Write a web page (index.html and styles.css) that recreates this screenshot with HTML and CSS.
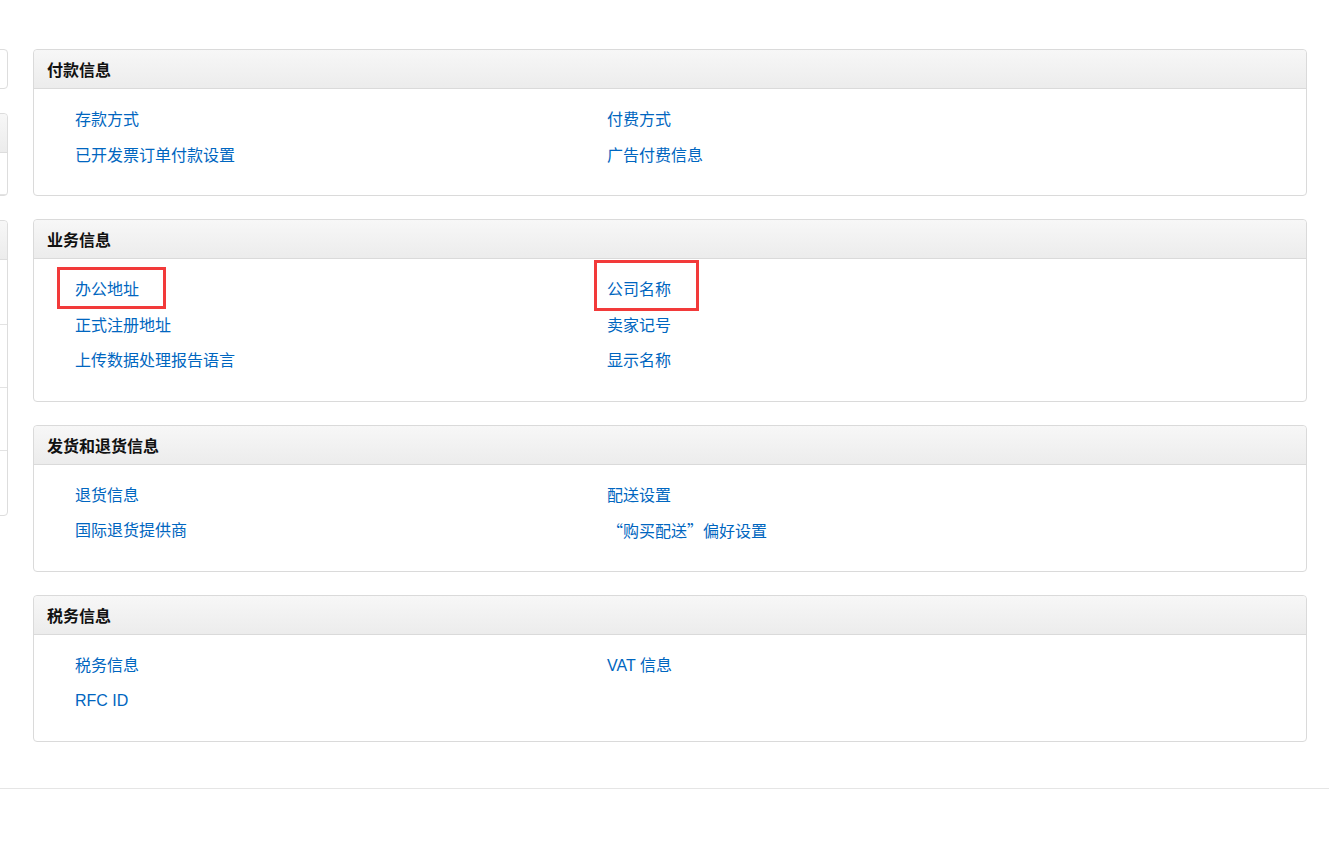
FILE: index.html
```html
<!DOCTYPE html>
<html lang="zh-CN">
<head>
<meta charset="utf-8">
<title>设置</title>
<link rel="stylesheet" href="styles.css">
</head>
<body>
<div class="page">
  <aside class="sidebar">
    <div class="sbox sbox-search"></div>
    <div class="sbox">
      <div class="shead"></div>
      <div class="srow srow-40"></div>
    </div>
    <div class="sbox">
      <div class="shead"></div>
      <div class="srow srow-65"></div>
      <div class="srow srow-63"></div>
      <div class="srow srow-63"></div>
      <div class="srow srow-64 last"></div>
    </div>
  </aside>

  <main class="main">
    <section class="panel">
      <div class="panel-head">付款信息</div>
      <div class="panel-body">
        <a class="link" href="#">存款方式</a>
        <a class="link" href="#">付费方式</a>
        <a class="link" href="#">已开发票订单付款设置</a>
        <a class="link" href="#">广告付费信息</a>
      </div>
    </section>

    <section class="panel">
      <div class="panel-head">业务信息</div>
      <div class="panel-body">
        <a class="link" href="#">办公地址<span class="mark mark-a"></span></a>
        <a class="link" href="#">公司名称<span class="mark mark-b"></span></a>
        <a class="link" href="#">正式注册地址</a>
        <a class="link" href="#">卖家记号</a>
        <a class="link" href="#">上传数据处理报告语言</a>
        <a class="link" href="#">显示名称</a>
      </div>
    </section>

    <section class="panel">
      <div class="panel-head">发货和退货信息</div>
      <div class="panel-body">
        <a class="link" href="#">退货信息</a>
        <a class="link" href="#">配送设置</a>
        <a class="link" href="#">国际退货提供商</a>
        <a class="link" href="#"><span class="cjk">“购买配送”</span>偏好设置</a>
      </div>
    </section>

    <section class="panel">
      <div class="panel-head">税务信息</div>
      <div class="panel-body">
        <a class="link" href="#">税务信息</a>
        <a class="link" href="#">VAT 信息</a>
        <a class="link" href="#">RFC ID</a>
      </div>
    </section>
  </main>
</div>
<div class="footer-line"></div>
</body>
</html>
```

FILE: styles.css
```css
html, body {
  margin: 0;
  padding: 0;
  background: #fff;
}

body {
  font-family: "Liberation Sans", "Noto Sans CJK SC", Arial, sans-serif;
  font-size: 16px;
  color: #111;
}

.page {
  display: flex;
  align-items: flex-start;
  padding-top: 49px;
}

.sidebar {
  width: 200px;
  margin-left: -192px;
  flex: none;
  display: flex;
  flex-direction: column;
  gap: 24px;
}

.sbox {
  border: 1px solid #ddd;
  border-radius: 4px;
  background: #fff;
}

.sbox-search {
  height: 38px;
}

.shead {
  height: 38px;
  border-bottom: 1px solid #ddd;
  background: linear-gradient(#f7f7f7, #ececec);
  border-radius: 4px 4px 0 0;
}

.srow {
  border-bottom: 1px solid #e3e3e3;
}
.srow.last { border-bottom: none; }
.srow-40 { height: 41px; }
.srow-65 { height: 64px; }
.srow-63 { height: 62px; }
.srow-64 { height: 64px; }

.main {
  margin-left: 25px;
  width: 1274px;
  flex: none;
  display: flex;
  flex-direction: column;
  gap: 23px;
}

.panel {
  border: 1px solid #dadada;
  border-radius: 4px;
  background: #fff;
}

.panel-head {
  height: 38px;
  line-height: 41px;
  padding-left: 13px;
  font-weight: bold;
  color: #111;
  background: linear-gradient(#f7f7f7, #ececec);
  border-bottom: 1px solid #dadada;
  border-radius: 4px 4px 0 0;
}

.panel-body {
  display: grid;
  grid-template-columns: 532px 1fr;
  padding: 13px 0 22px 41px;
}

.link {
  position: relative;
  display: block;
  justify-self: start;
  line-height: 35.5px;
  height: 35.5px;
  color: #0066c0;
  text-decoration: none;
}

.cjk {
  font-family: "Noto Sans CJK SC", sans-serif;
}

.mark {
  position: absolute;
  border: 3px solid #f23a3a;
  pointer-events: none;
}

.mark-a {
  left: -18px;
  top: -5px;
  width: 103px;
  height: 36px;
}

.mark-b {
  left: -13px;
  top: -12px;
  width: 99px;
  height: 45px;
}

.footer-line {
  margin-top: 46px;
  height: 1px;
  background: #e5e5e5;
}
```
